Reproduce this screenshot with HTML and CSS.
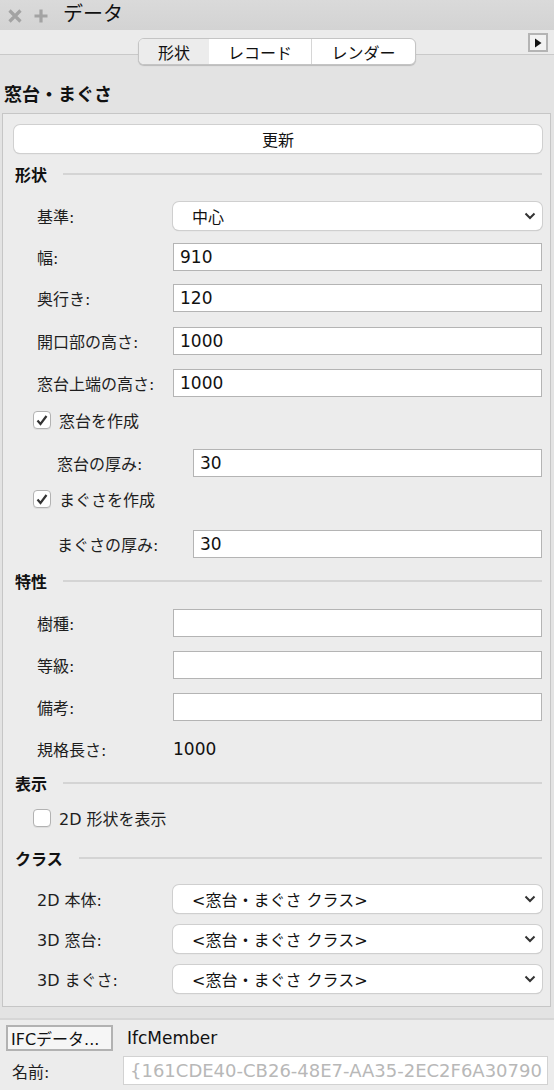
FILE: index.html
```html
<!DOCTYPE html>
<html lang="ja">
<head>
<meta charset="utf-8">
<link rel="stylesheet" href="styles.css">
</head>
<body>
<div class="titlebar">
  <svg class="ticon" width="14" height="14" viewBox="0 0 14 14"><path d="M1.5 1.5L12.5 12.5M12.5 1.5L1.5 12.5" stroke="#a3a3a3" stroke-width="3.2" stroke-linecap="butt"/></svg>
  <svg class="ticon plus" width="14" height="14" viewBox="0 0 14 14"><path d="M7 0.5V13.5M0.5 7H13.5" stroke="#a3a3a3" stroke-width="3.2"/></svg>
  <span class="title">データ</span>
</div>
<div class="toolbar">
  <div class="tabs">
    <div class="tab sel">形状</div>
    <div class="tab t2">レコード</div>
    <div class="tab t3">レンダー</div>
  </div>
  <div class="playbtn"><svg width="8" height="10" viewBox="0 0 8 10"><path d="M1 0.5L7.5 5L1 9.5Z" fill="#111"/></svg></div>
</div>
<div class="heading">窓台・まぐさ</div>
<div class="panel">
  <div class="button">更新</div>

  <div class="section s1"><span>形状</span><i></i></div>
  <div class="row g18"><span class="lbl">基準:</span><div class="select">中心<svg class="chev" width="12" height="8" viewBox="0 0 12 8"><path d="M1.5 1.5L6 6L10.5 1.5" stroke="#333" stroke-width="2" fill="none"/></svg></div></div>
  <div class="row g13"><span class="lbl">幅:</span><div class="input">910</div></div>
  <div class="row g13"><span class="lbl">奥行き:</span><div class="input">120</div></div>
  <div class="row g15"><span class="lbl">開口部の高さ:</span><div class="input">1000</div></div>
  <div class="row g14"><span class="lbl">窓台上端の高さ:</span><div class="input">1000</div></div>
  <div class="check g13"><span class="box on"><svg width="12" height="11" viewBox="0 0 12 11"><path d="M1.5 5.5L4.5 9L10.5 1" stroke="#333" stroke-width="2.2" fill="none"/></svg></span>窓台を作成</div>
  <div class="row sub g19"><span class="lbl">窓台の厚み:</span><div class="input">30</div></div>
  <div class="check g12"><span class="box on"><svg width="12" height="11" viewBox="0 0 12 11"><path d="M1.5 5.5L4.5 9L10.5 1" stroke="#333" stroke-width="2.2" fill="none"/></svg></span>まぐさを作成</div>
  <div class="row sub g21"><span class="lbl">まぐさの厚み:</span><div class="input">30</div></div>

  <div class="section g13"><span>特性</span><i></i></div>
  <div class="row g18"><span class="lbl">樹種:</span><div class="input"></div></div>
  <div class="row g14"><span class="lbl">等級:</span><div class="input"></div></div>
  <div class="row g14"><span class="lbl">備考:</span><div class="input"></div></div>
  <div class="row g14"><span class="lbl">規格長さ:</span><div class="value">1000</div></div>

  <div class="section g10"><span>表示</span><i></i></div>
  <div class="check g15"><span class="box"></span>2D 形状を表示</div>

  <div class="section g20"><span>クラス</span><i></i></div>
  <div class="row g17"><span class="lbl">2D 本体:</span><div class="select">&lt;窓台・まぐさ クラス&gt;<svg class="chev" width="12" height="8" viewBox="0 0 12 8"><path d="M1.5 1.5L6 6L10.5 1.5" stroke="#333" stroke-width="2" fill="none"/></svg></div></div>
  <div class="row g12"><span class="lbl">3D 窓台:</span><div class="select">&lt;窓台・まぐさ クラス&gt;<svg class="chev" width="12" height="8" viewBox="0 0 12 8"><path d="M1.5 1.5L6 6L10.5 1.5" stroke="#333" stroke-width="2" fill="none"/></svg></div></div>
  <div class="row g12"><span class="lbl">3D まぐさ:</span><div class="select">&lt;窓台・まぐさ クラス&gt;<svg class="chev" width="12" height="8" viewBox="0 0 12 8"><path d="M1.5 1.5L6 6L10.5 1.5" stroke="#333" stroke-width="2" fill="none"/></svg></div></div>
</div>
<div class="footer">
  <div class="frow">
    <div class="ifcbtn">IFCデータ...</div>
    <span class="ifcval">IfcMember</span>
  </div>
  <div class="frow nm">
    <span class="nlbl">名前:</span>
    <div class="ninput">{161CDE40-CB26-48E7-AA35-2EC2F6A30790</div>
  </div>
</div>
</body>
</html>
```

FILE: styles.css
```css
* { box-sizing: border-box; }
html, body { margin: 0; padding: 0; }
body {
  width: 554px;
  height: 1090px;
  overflow: hidden;
  background: #e3e3e3;
  font-family: "DejaVu Sans", "Noto Sans CJK JP", sans-serif;
  color: #1e1e1e;
  font-size: 16px;
}
.titlebar {
  height: 30px;
  background: linear-gradient(#dadada, #d3d3d3);
  display: flex;
  align-items: center;
  padding-left: 8px;
}
.ticon { margin-top: 1px; }
.plus { margin-left: 12px; }
.title {
  margin-left: 15px;
  font-size: 20px;
  color: #111;
  line-height: 1;
  margin-top: -3px;
}
.toolbar {
  position: relative;
  height: 25px;
  background: #ebebeb;
  border-bottom: 1px solid #c9c9c9;
}
.tabs {
  position: absolute;
  left: 138px;
  top: 8px;
  width: 278px;
  height: 27px;
  display: flex;
  background: #fff;
  border: 1px solid #c4c4c4;
  border-radius: 6px;
  box-shadow: 0 1px 1px rgba(0,0,0,0.18);
  overflow: hidden;
}
.tab {
  display: flex;
  align-items: center;
  justify-content: center;
  font-size: 16px;
  color: #111;
}
.tab.sel { width: 70px; background: #ececec; }
.tab.t2 { width: 103px; border-right: 1px solid #d6d6d6; }
.tab.t3 { flex: 1; }
.playbtn {
  position: absolute;
  right: 6px;
  top: 3px;
  width: 20px;
  height: 19px;
  border: 2px solid #b4b4b4;
  background: #f2f2f2;
  display: flex;
  align-items: center;
  justify-content: center;
}
.heading {
  height: 58px;
  padding: 29px 0 0 4px;
  font-size: 18px;
  font-weight: bold;
  color: #111;
  line-height: 22px;
}
.panel {
  margin: 0 3px 0 2px;
  background: #ececec;
  border: 1px solid #c6c6c6;
  padding: 11px 8px 13px 11px;
}
.button {
  height: 28px;
  background: #fff;
  border-radius: 6px;
  box-shadow: 0 0 0 1px #d0d0d0, 0 1px 1px rgba(0,0,0,0.2);
  display: flex;
  align-items: center;
  justify-content: center;
  font-size: 16px;
  color: #111;
}
.section {
  height: 20px;
  display: flex;
  align-items: center;
  font-weight: bold;
  font-size: 16px;
  color: #111;
  padding-left: 1px;
}
.section i {
  flex: 1;
  height: 2px;
  background: #d4d4d4;
  margin-left: 16px;
}
.s1 { margin-top: 11px; }
.row {
  height: 28px;
  display: flex;
  align-items: center;
}
.lbl {
  width: 159px;
  padding-left: 23px;
  font-size: 16px;
  color: #1e1e1e;
  flex: none;
  white-space: nowrap;
}
.row.sub .lbl { width: 179px; padding-left: 43px; }
.input {
  flex: 1;
  height: 28px;
  background: #fff;
  border: 1px solid #b4b4b4;
  display: flex;
  align-items: center;
  padding-left: 6px;
  font-size: 17px;
  color: #111;
}
.select {
  flex: 1;
  height: 28px;
  background: #fff;
  border-radius: 6px;
  box-shadow: 0 0 0 1px #cfcfcf, 0 1px 1px rgba(0,0,0,0.22);
  display: flex;
  align-items: center;
  padding-left: 19px;
  padding-right: 6px;
  font-size: 16px;
  color: #111;
}
.chev { margin-left: auto; }
.value { font-size: 17px; color: #111; }
.check {
  height: 20px;
  display: flex;
  align-items: center;
  padding-left: 19px;
  font-size: 16px;
  color: #1e1e1e;
}
.box {
  width: 18px;
  height: 18px;
  border: 1px solid #b2b2b2;
  border-radius: 4px;
  background: #fff;
  margin-right: 8px;
  display: flex;
  align-items: center;
  justify-content: center;
  box-shadow: 0 1px 0 rgba(0,0,0,0.06);
}
.g10 { margin-top: 10px; }
.g11 { margin-top: 11px; }
.g12 { margin-top: 12px; }
.g13 { margin-top: 13px; }
.g14 { margin-top: 14px; }
.g15 { margin-top: 15px; }
.g17 { margin-top: 17px; }
.g18 { margin-top: 18px; }
.g19 { margin-top: 19px; }
.g20 { margin-top: 20px; }
.g21 { margin-top: 21px; }
.footer {
  margin-top: 11px;
  border-top: 2px solid #d6d6d6;
  background: #ececec;
  height: 80px;
  padding: 5px 6px 0 6px;
}
.frow {
  display: flex;
  align-items: center;
  height: 26px;
}
.ifcbtn {
  width: 107px;
  height: 26px;
  border: 2px solid #b2b2b2;
  background: #f6f6f6;
  font-size: 16px;
  color: #111;
  display: flex;
  align-items: center;
  padding-left: 3px;
  white-space: nowrap;
  overflow: hidden;
}
.ifcval { margin-left: 14px; font-size: 17px; color: #111; }
.frow.nm { margin-top: 5px; height: 29px; }
.nlbl { width: 117px; padding-left: 6px; font-size: 16px; color: #1e1e1e; }
.ninput {
  flex: 1;
  height: 29px;
  background: #fff;
  border: 1px solid #d2d2d2;
  color: #b8b8b8;
  font-size: 18px;
  display: flex;
  align-items: center;
  padding-left: 6px;
  white-space: nowrap;
  overflow: hidden;
}
```
